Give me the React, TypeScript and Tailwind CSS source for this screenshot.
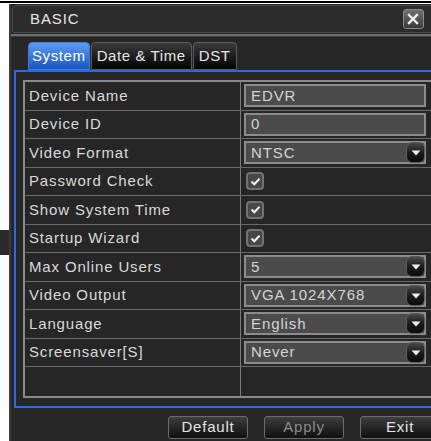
import React from 'react';

type Field =
  | { label: string; kind: 'text'; value: string }
  | { label: string; kind: 'select'; value: string }
  | { label: string; kind: 'check' }
  | { label: string; kind: 'empty' };

const fields: Field[] = [
  { label: 'Device Name', kind: 'text', value: 'EDVR' },
  { label: 'Device ID', kind: 'text', value: '0' },
  { label: 'Video Format', kind: 'select', value: 'NTSC' },
  { label: 'Password Check', kind: 'check' },
  { label: 'Show System Time', kind: 'check' },
  { label: 'Startup Wizard', kind: 'check' },
  { label: 'Max Online Users', kind: 'select', value: '5' },
  { label: 'Video Output', kind: 'select', value: 'VGA 1024X768' },
  { label: 'Language', kind: 'select', value: 'English' },
  { label: 'Screensaver[S]', kind: 'select', value: 'Never' },
];

const font = "font-['Liberation_Sans',Arial,sans-serif]";

const DropArrow = () => (
  <div className="absolute right-[-1px] top-[-1px] w-[19px] h-[21px] rounded-[6px] bg-gradient-to-b from-[#4a4a4a] via-[#1c1c1c] to-[#0c0c0c] border border-[#5c5c5c] flex justify-center pt-[7px]">
    <svg width="10" height="6" viewBox="0 0 10 6">
      <path d="M0.5 0.5h9L5 5.5z" fill="#f2f2f2" />
    </svg>
  </div>
);

const CheckBox = () => (
  <div className="ml-[2px] w-[18px] h-[18px] rounded-[4px] border-2 border-[#727272] bg-[#474747] flex items-center justify-center">
    <svg width="11" height="9" viewBox="0 0 11 9">
      <path d="M1.5 4.5l2.8 2.8L9.5 1.8" fill="none" stroke="#f4f4f4" strokeWidth="2" />
    </svg>
  </div>
);

const ValueCell = ({ f }: { f: Field }) => {
  if (f.kind === 'check') return <CheckBox />;
  if (f.kind === 'empty') return null;
  return (
    <div className="relative w-[182px] h-[23px] border-2 border-[#8c8c8c] bg-[#4b4b4b] flex items-center pl-[5px] text-[15px] tracking-[0.9px] text-[#d4d4d4]">
      {f.value}
      {f.kind === 'select' && <DropArrow />}
    </div>
  );
};

const Tab = ({ label, active }: { label: string; active?: boolean }) => (
  <div
    className={
      active
        ? 'h-[28px] px-[3px] flex items-center rounded-t-[4px] border border-[#3d7be0] bg-gradient-to-b from-[#5b9cf0] to-[#1c55c0] text-white'
        : 'h-[28px] px-[5px] flex items-center rounded-t-[4px] border border-[#5a5a5a] bg-gradient-to-b from-[#3c3c3c] to-[#050505] text-[#e6e6e6]'
    }
  >
    {label}
  </div>
);

const Button = ({ label, disabled }: { label: string; disabled?: boolean }) => (
  <div
    className={
      'w-[80px] h-[23px] shrink-0 rounded-[3px] border border-[#6a6a6a] bg-gradient-to-b from-[#3e3e3e] to-[#101010] flex items-center justify-center text-[15px] tracking-[0.8px] ' +
      (disabled ? 'text-[#8a8a8a]' : 'text-[#e4e4e4]')
    }
  >
    {label}
  </div>
);

export default function App() {
  const rows: Field[] = [...fields, { label: '', kind: 'empty' }];

  return (
    <div className={`w-[431px] h-[441px] overflow-hidden bg-white ${font}`}>
      <div className="h-[1px] bg-white" />
      <div className="h-[2px] bg-black" />
      <div className="h-[1px] bg-white" />

      <div className="flex h-[437px]">
        {/* strip of the desktop behind the dialog */}
        <div className="w-[9px] shrink-0 flex flex-col">
          <div className="h-[226px] bg-white" />
          <div className="h-[25px] bg-[#2a2a2a]" />
          <div className="flex-1 bg-white" />
        </div>
        <div className="w-[2px] shrink-0 bg-[#3c3c3c]" />

        {/* dialog window */}
        <div className="w-[460px] shrink-0 bg-[#272727] flex flex-col">
          {/* title bar */}
          <div className="h-[30px] pl-[1px] pt-[1px]">
            <div className="h-[28px] rounded-tl-[5px] rounded-bl-[2px] border border-[#4a4a4a] bg-[#2c2c2c] flex items-center pl-[17px]">
              <span className="text-[15px] tracking-[0.9px] text-[#e6e6e6]">BASIC</span>
              <div className="ml-[323px] w-[21px] h-[20px] rounded-[3px] border border-[#8a8a8a] bg-gradient-to-b from-[#707070] to-[#3a3a3a] flex items-center justify-center">
                <svg width="12" height="12" viewBox="0 0 12 12">
                  <path d="M2 2l8 8M10 2l-8 8" stroke="#f0f0f0" strokeWidth="2.4" strokeLinecap="square" />
                </svg>
              </div>
            </div>
          </div>
          <div className="h-[2px] bg-[#6e6e6e]" />
          <div className="h-[1px] bg-[#3e3e3e]" />

          {/* tabs */}
          <div className="h-[33px] flex items-end pl-[17px] gap-[1px] text-[15px] tracking-[0.6px]">
            <Tab label="System" active />
            <Tab label="Date & Time" />
            <Tab label="DST" />
          </div>

          {/* blue framed page */}
          <div className="ml-[3px] border-l-2 border-t-2 border-b-2 border-[#2f6ad8] pt-[8px] pb-[8px] pl-[7px]">
            <div className="border-2 border-[#8a8a8a] bg-[#262626]">
              {rows.map((f, i) => (
                <div
                  key={i}
                  className={
                    'flex h-[28.5px] ' + (i < rows.length - 1 ? 'border-b border-[#6a6a6a]' : '')
                  }
                >
                  <div className="w-[216px] shrink-0 border-r border-[#7a7a7a] flex items-center pl-[4px] text-[15px] tracking-[0.85px] text-[#dadada]">
                    {f.label}
                  </div>
                  <div className="flex-1 flex items-center pl-[3px]">
                    <ValueCell f={f} />
                  </div>
                </div>
              ))}
            </div>
          </div>

          {/* footer buttons */}
          <div className="flex pt-[8px] pl-[157px] gap-[16px]">
            <Button label="Default" />
            <Button label="Apply" disabled />
            <Button label="Exit" />
          </div>
        </div>
      </div>
    </div>
  );
}
